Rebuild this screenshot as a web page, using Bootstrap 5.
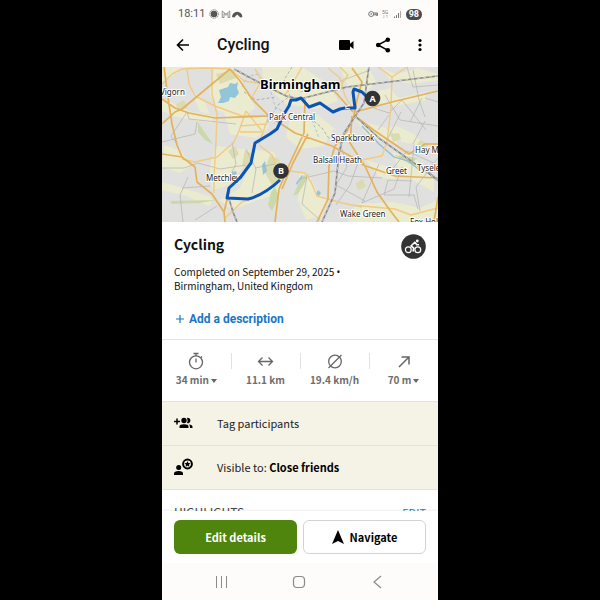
<!DOCTYPE html>
<html lang="en">
<head>
<meta charset="utf-8">
<meta name="viewport" content="width=device-width, initial-scale=1">
<title>Cycling</title>
<link href="https://cdn.jsdelivr.net/npm/bootstrap@5.3.0/dist/css/bootstrap.min.css" rel="stylesheet">
<style>
body{background:#000;color:#111;font-family:"Noto Sans CJK SC","Open Sans",sans-serif;font-size:12px;line-height:16px}
svg{display:block;flex-shrink:0}
.phone{width:46%;min-width:272px;height:100vh;background:#fff}
.top-area,.system-nav{background:#fdfcfa}
.roboto{font-family:Roboto,sans-serif}
.status{height:28px;color:#555;font-size:11px}
.battery{background:#4b4b4b;color:#fff;font-size:9px;line-height:11px;padding:0 3px}
.app-bar{height:39px;padding-bottom:6px}
.app-title{font-size:16px;line-height:24px;font-weight:500;margin-left:28px}
.plain{background:none;border:0;padding:0;color:#000}
.side{padding-left:12px;padding-right:12px}
.scroller{min-height:0}
.heading{font-size:14px;line-height:20px}
.meta{font-size:10px;line-height:13px;padding-top:6px}
.meta .dot{font-family:"Noto Sans",sans-serif}
.describe{font-size:12px;line-height:16px;font-weight:700;color:#1976c5;margin:15px 0 8px;padding:4px 0}
.hair{border-color:#e3e3e1!important}
.stats{height:63px;color:#6e6e6e;font-size:10px;font-weight:700}
.stats .stat{line-height:20px;padding-top:8px}
.stats .stat+.stat::before{content:"";position:absolute;left:0;top:13px;height:16px;border-left:1px solid #e1e1e1}
.option{background:#f4f3e6;height:44px;font-size:11px;color:#222;padding-bottom:2px}
.option svg{margin-right:24px}
.highlights{font-size:12px;color:#444;padding-top:14px}
.highlights a{color:#2b83ba;font-size:11px}
.actions{padding-top:9px;padding-bottom:9px;gap:6px;box-shadow:0 -1px 2px #00000012}
.actions .btn{height:34px;padding:0;border-radius:6px;font-size:11px;font-weight:700}
.btn-edit,.btn-edit:hover{background:#4f850d;color:#fff}
.btn-go{border-color:#d3d3d3;color:#000}
.system-nav{height:37px;padding:0 54px 0 52px}
.map text{font-family:"Noto Sans",sans-serif;font-size:8px;fill:#222;stroke:#fff;stroke-width:2px;stroke-linejoin:round;paint-order:stroke}
.map .city{font-size:13px;font-weight:700;fill:#000}
.map .pin{font-size:9px;font-weight:700;fill:#fff;stroke:none;text-anchor:middle}
</style>
<script src="https://cdn.jsdelivr.net/npm/bootstrap@5.3.0/dist/js/bootstrap.bundle.min.js"></script>
</head>
<body>
<div class="phone d-flex flex-column mx-auto overflow-hidden">
  <header class="top-area flex-shrink-0 roboto">
    <div class="status side d-flex align-items-center">
      <span class="mx-1">18:11</span>
      <svg width="36" height="10" viewBox="2 0 36 10" aria-hidden="true"><circle cx="7" cy="5" r="4.300" fill="none" stroke="#888" stroke-width="1" stroke-dasharray="1.500 .6"/><circle cx="7" cy="5" r="3.300" fill="#555"/><path d="M15.200 8.500V2l3.800 3.200L22.800 2v6.500M15.200 8.500h1.800V4.500l2 1.800 2-1.800v4h1.800" fill="none" stroke="#888" stroke-width=".9"/><path d="M25 8a5.200 5.200 0 1 1 10.400 0l-2 .5L30.200 5.500l-3 3z" fill="#555"/></svg>
      <span class="d-flex align-items-center gap-1 ms-auto me-1">
        <svg width="34" height="10" viewBox="0 0 34 10" aria-hidden="true"><circle cx="3.200" cy="5" r="2.500" fill="none" stroke="#777"/><circle cx="3.200" cy="5" r=".8" fill="#666"/><path d="M5.500 4h4v2.500h-1V5.800h-3M8 4v2" stroke="#777" fill="none"/><text x="14" y="5" font-size="5" fill="#777">5G</text><path d="M16 6v3m-1-1 1 1M19 9V6m-1 1 1-1" stroke="#bbb" fill="none" stroke-width=".7"/><path d="M26.500 9V7.500M28.500 9V6M30.500 9V4" stroke="#777"/><path d="M32.500 9V2" stroke="#aaa"/></svg>
        <span class="battery rounded-pill fw-bold">98</span>
      </span>
    </div>
    <div class="app-bar side d-flex align-items-center">
      <button class="plain" type="button" aria-label="Back"><svg width="15" height="14" viewBox="0 0 15 14"><path d="M15 7H4M9 1.500 3.500 7 9 12.500" fill="none" stroke="#000" stroke-width="1.600"/></svg></button>
      <h1 class="app-title mb-0">Cycling</h1>
      <span class="d-flex align-items-center ms-auto">
        <button class="plain" type="button" aria-label="Video"><svg width="16" height="12" viewBox="0 0 16 12"><path d="M2 1h9q1 0 1 1v2.800L15.500 2v8L12 7.200V10q0 1-1 1H2q-1 0-1-1V2q0-1 1-1z"/></svg></button>
        <button class="plain ms-3 ps-1" type="button" aria-label="Share"><svg width="18" height="16" viewBox="-1 0 18 16"><path d="M13 2.700 3 8l10 5.300" fill="none" stroke="#000" stroke-width="1.500"/><circle cx="12.800" cy="2.800" r="2.300"/><circle cx="3.200" cy="8" r="2.300"/><circle cx="12.800" cy="13.200" r="2.300"/></svg></button>
        <button class="plain ms-3" type="button" aria-label="More"><svg width="18" height="14" viewBox="2 0 18 14"><circle cx="14" cy="2.500" r="1.600"/><circle cx="14" cy="7" r="1.600"/><circle cx="14" cy="11.500" r="1.600"/></svg></button>
      </span>
    </div>
  </header>

  <main class="scroller flex-grow-1 overflow-hidden">
    <svg class="map w-100" viewBox="162 67 276 155" role="img" aria-label="Route map of Birmingham">
      <path fill="#e0e0df" d="M162 67h276v155H162z"/>
      <g fill="#ebebcf">
        <path d="M162 67h25l-15 9-10 8zM214 68h22l9 18 10 22-12 10-26-8-8-18 4-12zM162 98l16 8 14 6 22 4-2 7-36-6-14-6zM224 112l22 4 20 0 2 12-12 10-26-4zM262 67h40l28 18 8 16-22 8-30-5-22-20zM192 92l12 8 6 14-10-2zM164 145l16 5 12 15-12 8-18-6z"/>
        <path d="M216 146l34 4-6 16-16 20-16 4-2-24zM256 150l18 2 10 22-6 20-20 6-26 10-12-10 20-12zM290 118l26-4 18 14-10 18-24 3-14-12zM340 67h28l8 14-10 12-18-6zM382 68l14 6 22-6 20 6v6l-26 4-22-4zM374 92l16-4 8 10 28-6v8l-30 6-22-4zM356 120l30 8 12 16-30-8zM396 126l18 8 12 12-24-4-14-14zM392 152l22 4 20 24v12l-18-10-16-10zM366 160l20 6 12 16-20-6zM300 172l10 4 8 18 10 4-6 18-16 4-8-20zM356 204l38-2 26 6 18-8v22h-90zM162 182l24 7 26 8-2 9-24-10-24-6z"/>
      </g>
      <g fill="#dbdbb2"><path d="M216 74l18-4 2 8-16 6zM176 104l8-4 4 8-10 3zM270 155l9 4 5 18-12 8-8-14zM355 183l8-4 3 8-8 3zM390 134l9-1 2 6-8 3zM245 150l9 5-6 14-6-3zM420 140l9 4-5 8-9-3zM228 151l7-5 4 8-6 5z"/></g>
      <path fill="#cbd9aa" d="M198 122l5 8 10 14-8-4-7-8zM170 201l46-1-16 3-28 1zM271 192l4-5 4 9-7 15-4-6zM302 176l8-2-12 20-5 2zM394 155l24 3-8 6z"/>
      <path fill="#92c4da" d="M219 90l9-3 2-4 5 1 3-2-1 6 2 5-4 5-5-1-1 4-6 2-5 0 3-6zM262 165l3-4 2 10-4 4zM318 190l3 3-2 3-3-2zM296 183l6-8 1 1-6 9zM232 172l4-1 1 3-5 2z"/>
      <g fill="none" stroke="#b3b3b3" stroke-width=".7">
        <path d="M187 112l2 7 47 5M197 122l-2 12-33 8M187 112l-16 24 6 8M162 168l22 0 14-5 22 6 26-4M182 188l28-2M188 177l-8 18 3 27M232 142l4 22-8 16M246 149l10 20-4 24M255 168l20-4M217 206l-22 14M300 92l38-10 32-12M385 95l15 25 38 6M371 107l18 6 13-13 24 30M378 130l11-15M401 112l-14 28M410 122l12-24M425 121l-12 23M413 70l6 30 6 17M425 98l13 4M407 67l6 20 25-2M300 179l34-8 14 5 34 2M307 176l-5 28 18 16M340 142l7 25-11 18 29 16M359 160l-9 25-14 20M379 164l-17 39 32-14 8-22M384 195l30 0 4 14M414 145l-5 52M412 181l-24-1-4 15M389 173l18-22 31 14M438 158l-22 29 4 24"/>
        <path stroke="#999" stroke-dasharray="3 2" d="M292 67l-8 13 6 16-12 9-13 21M310 118l12 10 8 12M244 92l12 8 20-3"/>
        <path stroke="#8dbdd0" stroke-dasharray="3 2" d="M242 87l5-10 10-3 13 14 5 19 9 5-10 12M312 120l7 18"/>
        <path stroke="#8dbdd0" stroke-width="1.300" d="M362 126l17 18 15 13 14 4 13 10M425 168l13 13"/>
      </g>
      <g fill="none" stroke="#efcb84" stroke-width="1.400" stroke-linejoin="round">
        <path d="M162 84l10-10 10-5 23-1 25 1M187 69l2 15 6 12 20 10 27 10h26M212 69v25l5 20-1 28-2 34 0 17M255 69l7 11-10 17M246 111l-7 20-6 13M246 111l16 20M240 126l25-2M240 132l22 0M232 144l-15 13-22 5-13-3M230 69l14 12 14 2M302 67l-8 14-9 14M328 68l12 10 5 18 10 17M340 67l8 8-10 14M377 66l15 11-1 31-4 34M392 77l15-10M290 171l15 2 6 9 6 14 25 7 20 4M362 160l20-4 5-14M259 145l13 10 8 22M225 218l17-16 20-7M268 118l-9 26M352 205l43 4 16 6 27-7"/>
      </g>
      <g fill="none" stroke="#e3b25b" stroke-width="1.700" stroke-linejoin="round">
        <path d="M164 66l3 25 5 33 5 21 5 12M230 69l-18 15-30 25-7 3-13 12M162 99l13 9 14 5 26 5 53-2M230 69l10 12 12 18 16 16M269 116l26 17 37 13 20 11 13 9M305 99l-1 34-14 30-11 26-4 33M308 134l-15 29-11 26M355 112l37-10 46-11M327 84l10 10 16 18M355 114l-8 17-12 15-6 20-1 33-11 23M352 116l-2 27 15 23 12 26 12 17 10 13M355 116l20 15 34 23 16-10h13M162 154l20 3 13 10 2 15 15 12 12 18 1 10M229 192l-5 20M366 166l29 10 43 2M438 197l-4 25M352 68l10 14-5 18-4 20"/>
      </g>
      <g fill="none" stroke="#888" stroke-width="1.600">
        <path d="M234 69l28 15 24 12 14 3 47-12 91-11M369 66l-5 37-20 30-5 20-4 40-13 29M355 116l25 23 58 41M229 199l4 13 4 10"/>
        <path stroke="#ddd" stroke-width=".8" stroke-dasharray="3 3" d="M234 69l28 15 24 12 14 3 47-12 91-11M369 66l-5 37-20 30-5 20-4 40-13 29M355 116l25 23 58 41M229 199l4 13 4 10"/>
      </g>
      <text class="city" x="260" y="89">Birmingham</text>
      <text x="206" y="181">Metchley</text>
      <path d="M368 98L362 92 354 89 353 92 355 108 345 108 340 109 333 112 320 103 309 107 301 98 296 100 291 100 289 106 284 114 277 129 270 134 255 143 251 163 240 178 229 188 227 198 248 199Q264 195 280 180" fill="none" stroke="#0b54b5" stroke-width="3" stroke-linejoin="round"/>
      <path d="M345 107l5-2M345 108l5 1" stroke="#fff" stroke-width="1"/>
      <text x="160" y="95">Vigorn</text><text x="269" y="120">Park Central</text><text x="331" y="141">Sparkbrook</text><text x="313" y="163">Balsall Heath</text><text x="415" y="153">Hay Mills</text><text x="386" y="174">Greet</text><text x="417" y="171">Tyseley</text><text x="340" y="217">Wake Green</text><text x="410" y="225">Fox Hollies</text>
      <circle cx="372.500" cy="98.500" r="7.800" fill="#333"/><text class="pin" x="372.500" y="102">A</text>
      <circle cx="281" cy="171" r="7.800" fill="#333"/><text class="pin" x="281" y="174">B</text>
    </svg>

    <section class="side pt-2">
      <div class="d-flex justify-content-between pt-1">
        <h2 class="heading fw-bold mb-0">Cycling</h2>
        <svg width="25" height="25" viewBox="0 0 25 25" role="img" aria-label="Cycling"><circle cx="12.500" cy="12.500" r="12.300" fill="#333"/><g fill="none" stroke="#fff" stroke-width="1.200"><circle cx="7.300" cy="15.800" r="2.900"/><circle cx="16.800" cy="15.800" r="2.900"/><path d="M12 17.500l.8-3.300-2.800-2.200 3.800-3.800 2 2.600h2.200" stroke-width="1.600" stroke-linejoin="round"/></g><circle cx="16.300" cy="7" r="1.400" fill="#fff"/></svg>
      </div>
      <p class="meta mb-0">Completed on September 29, 2025 <span class="dot">•</span><br>Birmingham, United Kingdom</p>
      <button class="plain describe roboto d-flex align-items-center" type="button"><svg class="me-1" width="11" height="10" viewBox="0 0 11 10"><path d="M6 1v8M2 5h8" stroke="#1976c5" stroke-width="1.200"/></svg>Add a description</button>
    </section>

    <section class="stats d-flex border-top border-bottom hair text-center">
      <div class="stat col-3 position-relative"><svg class="mx-auto mt-1" width="18" height="18" viewBox="0 0 18 18" fill="none" stroke="#666" stroke-width="1.300"><circle cx="8" cy="10.300" r="6.500"/><path d="M5.500 1.500h5M8 2v2M13 4.500l1 1M8 6.500v4"/></svg>34 min <svg class="d-inline-block" width="6" height="5" viewBox="0 0 6 5"><path d="M0 0h6L3 4z" fill="#666"/></svg></div>
      <div class="stat col-3 position-relative"><svg class="mx-auto mt-1" width="18" height="18" viewBox="0 0 18 18" fill="none" stroke="#666" stroke-width="1.300"><path d="M2 9.500h13M5.500 5.500l-4 4 4 4M11.500 5.500l4 4-4 4"/></svg>11.1 km</div>
      <div class="stat col-3 position-relative"><svg class="mx-auto mt-1" width="18" height="18" viewBox="0 0 18 18" fill="none" stroke="#666" stroke-width="1.300"><circle cx="9" cy="9.500" r="6.300"/><path d="M2.500 16l13-13"/></svg>19.4 km/h</div>
      <div class="stat col-3 position-relative"><svg class="mx-auto mt-1" width="18" height="18" viewBox="0 0 18 18" fill="none" stroke="#666" stroke-width="1.500"><path d="M4 15l10-10M6.500 5H14v7.500"/></svg>70 m<svg class="d-inline-block" width="8" height="5" viewBox="-2 0 8 5"><path d="M0 0h6L3 4z" fill="#666"/></svg></div>
    </section>

    <button type="button" class="plain option side w-100 d-flex align-items-center text-start border-bottom hair"><svg width="19" height="16" viewBox="0 0 19 16"><path d="M0 6.500h6M3 3.500v6" stroke="#000" stroke-width="1.500"/><circle cx="10" cy="5.500" r="2.700"/><path d="M5.500 13v-1.500q0-2.300 4.500-2.300t4.500 2.300V13zM13 2.900a2.700 2.700 0 1 1 0 5.200q1.200-2.600 0-5.200zM15 9.400q3.500.5 3.500 2.300V13H16q.2-2.200-1-3.600z"/></svg>Tag participants</button>
    <button type="button" class="plain option side w-100 d-flex align-items-center text-start border-bottom hair"><svg width="19" height="18" viewBox="0 0 19 18"><circle cx="4.700" cy="9.500" r="2.500"/><path d="M0 17v-1.500q0-2.500 4.700-2.500 4.300 0 4.300 2.500V17z"/><circle cx="13.500" cy="6" r="4.400" fill="none" stroke="#000" stroke-width="2"/><path d="M13.500 3.100l.9 1.900 2.100.3-1.500 1.400.4 2.100-1.900-1-1.900 1 .4-2.100-1.500-1.400 2.100-.3z"/></svg><span>Visible to: <strong class="text-black">Close friends</strong></span></button>
    <section class="highlights side d-flex justify-content-between"><span>HIGHLIGHTS</span><a href="#" class="text-decoration-none">EDIT</a></section>
  </main>

  <div class="actions side d-flex flex-shrink-0 bg-white">
    <button class="btn btn-edit w-50" type="button">Edit details</button>
    <button class="btn btn-go w-50 d-flex align-items-center justify-content-center" type="button"><svg class="me-1" width="14" height="14" viewBox="0 0 14 14"><path d="M6 0l6 14-6-3-6 3z"/></svg>Navigate</button>
  </div>
  <nav class="system-nav flex-shrink-0 d-flex align-items-center justify-content-between" aria-label="System">
    <button class="plain" type="button" aria-label="Recent apps"><svg width="14" height="14" viewBox="0 0 14 14"><path d="M2.500 1v12M7.500 1v12M12.500 1v12" stroke="#8a8a8a" stroke-width="1"/></svg></button>
    <button class="plain" type="button" aria-label="Home"><svg width="14" height="14" viewBox="0 0 14 14"><rect x="1.500" y="1.500" width="11" height="11" rx="3.500" fill="none" stroke="#8a8a8a" stroke-width="1.200"/></svg></button>
    <button class="plain" type="button" aria-label="Go back"><svg width="14" height="14" viewBox="0 0 14 14"><path d="M11 1L4 7l7 6" fill="none" stroke="#8a8a8a" stroke-width="1.200"/></svg></button>
  </nav>
</div>
</body>
</html>
